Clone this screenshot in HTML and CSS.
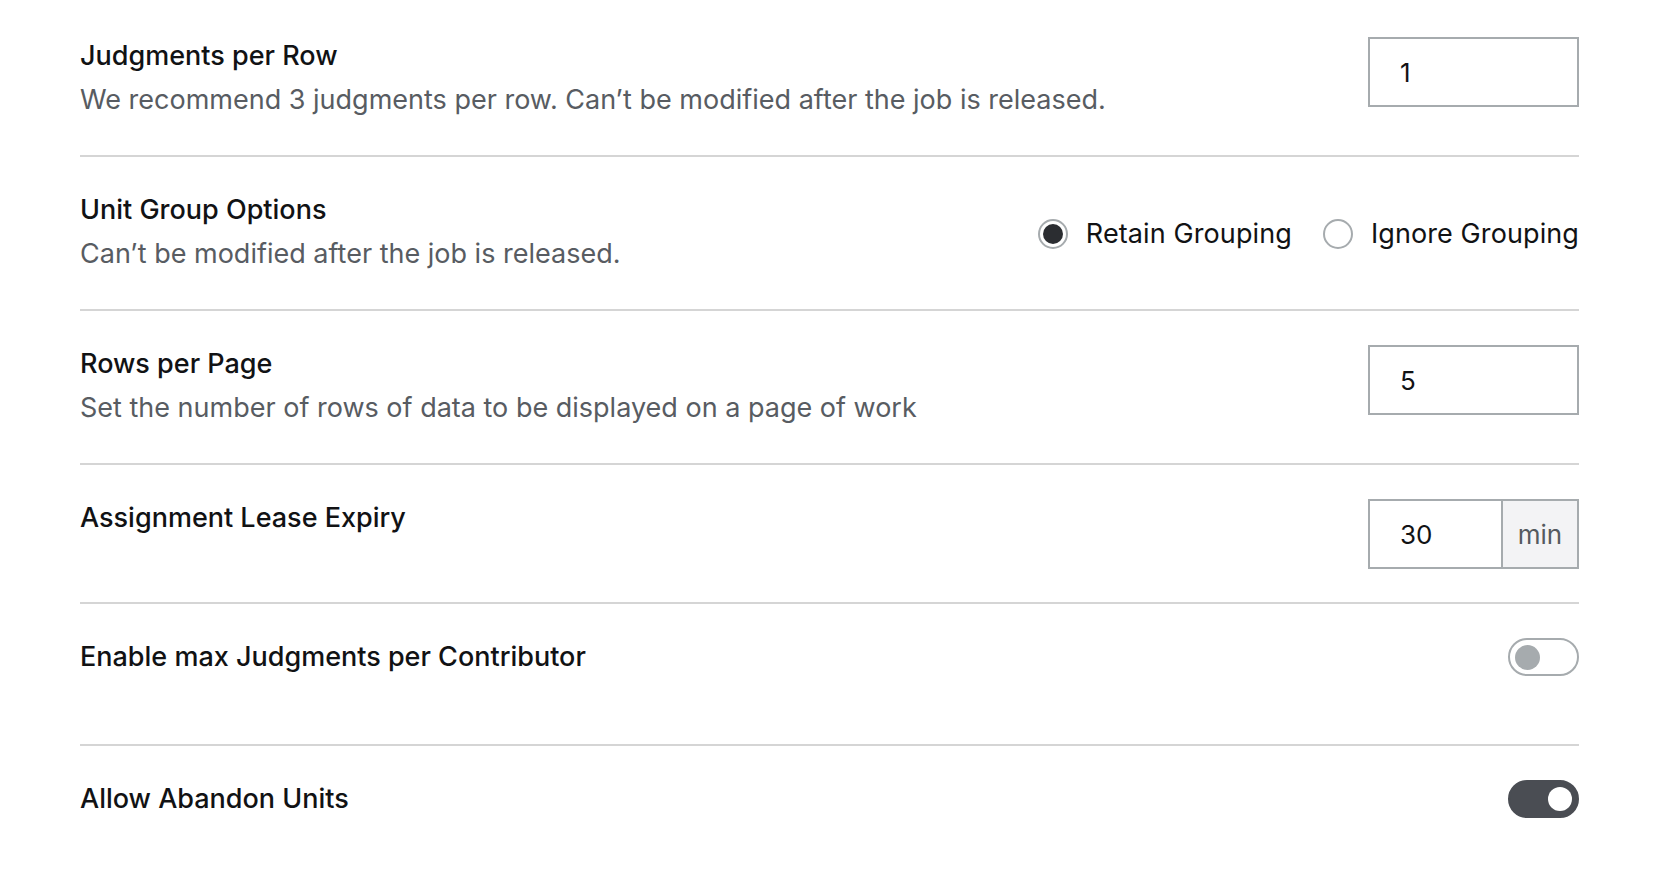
FILE: index.html
```html
<!DOCTYPE html>
<html>
<head>
<meta charset="utf-8">
<link rel="stylesheet" href="styles.css">
</head>
<body>
<div class="settings">
  <div class="row">
    <div class="text">
      <div class="title">Judgments per Row</div>
      <div class="desc">We recommend 3 judgments per row. Can’t be modified after the job is released.</div>
    </div>
    <div class="control top">
      <div class="input"><span class="value">1</span></div>
    </div>
  </div>

  <div class="row">
    <div class="text">
      <div class="title">Unit Group Options</div>
      <div class="desc">Can’t be modified after the job is released.</div>
    </div>
    <div class="control center radios">
      <label class="radio"><span class="circle checked"></span><span class="rlabel">Retain Grouping</span></label>
      <label class="radio"><span class="circle"></span><span class="rlabel">Ignore Grouping</span></label>
    </div>
  </div>

  <div class="row">
    <div class="text">
      <div class="title">Rows per Page</div>
      <div class="desc">Set the number of rows of data to be displayed on a page of work</div>
    </div>
    <div class="control top">
      <div class="input"><span class="value">5</span></div>
    </div>
  </div>

  <div class="row">
    <div class="text">
      <div class="title">Assignment Lease Expiry</div>
    </div>
    <div class="control top">
      <div class="input addon-input"><span class="value">30</span><span class="addon">min</span></div>
    </div>
  </div>

  <div class="row tall">
    <div class="text">
      <div class="title">Enable max Judgments per Contributor</div>
    </div>
    <div class="control top">
      <span class="toggle"><span class="knob"></span></span>
    </div>
  </div>

  <div class="row last">
    <div class="text">
      <div class="title">Allow Abandon Units</div>
    </div>
    <div class="control top">
      <span class="toggle on"><span class="knob"></span></span>
    </div>
  </div>
</div>
</body>
</html>
```

FILE: styles.css
```css
html, body {
  margin: 0;
  padding: 0;
  background: #ffffff;
}

body {
  font-family: Inter, "Noto Sans", sans-serif;
  color: #111214;
}

.settings {
  padding: 3px 81px 0 80px;
}

.row {
  display: flex;
  justify-content: space-between;
  padding: 34px 0 33px;
  border-bottom: 2px solid #d5d5d5;
}

.row.tall {
  min-height: 73px;
}

.row.last {
  border-bottom: none;
}

.text {
  display: flex;
  flex-direction: column;
}

.title {
  font-size: 27px;
  font-weight: 500;
  line-height: 38px;
  color: #111214;
}

.desc {
  font-size: 27px;
  line-height: 38px;
  margin-top: 6px;
  margin-bottom: 3px;
  color: #585c62;
}

.control {
  display: flex;
}

.control.top {
  align-self: flex-start;
}

.control.center {
  align-self: center;
}

.input {
  box-sizing: border-box;
  width: 211px;
  height: 70px;
  border: 2px solid #a6abae;
  display: flex;
  align-items: center;
  padding-left: 30px;
  font-size: 26px;
  color: #111214;
}

.addon-input {
  padding-left: 0;
}

.addon-input .value {
  flex: 1;
  padding-left: 30px;
}

.addon {
  box-sizing: border-box;
  width: 76px;
  height: 100%;
  background: #f3f3f5;
  border-left: 2px solid #a6abae;
  display: flex;
  align-items: center;
  justify-content: center;
  color: #555a60;
  font-size: 26px;
}

.radios {
  gap: 31px;
}

.radio {
  display: flex;
  align-items: center;
  gap: 18px;
  font-size: 27px;
  letter-spacing: 0.1px;
  line-height: 38px;
  color: #111214;
}

.circle {
  box-sizing: border-box;
  width: 30px;
  height: 30px;
  border-radius: 50%;
  border: 2px solid #a6abae;
  background: #fff;
  display: inline-flex;
  align-items: center;
  justify-content: center;
}

.circle.checked::after {
  content: "";
  width: 20px;
  height: 20px;
  border-radius: 50%;
  background: #2b2d31;
}

.toggle {
  box-sizing: border-box;
  width: 71px;
  height: 38px;
  border-radius: 19px;
  border: 2px solid #a6abae;
  background: #fff;
  display: flex;
  align-items: center;
  padding: 0 5px;
}

.toggle .knob {
  width: 25px;
  height: 25px;
  border-radius: 50%;
  background: #a6abae;
}

.toggle.on {
  background: #4a4d53;
  border-color: #4a4d53;
  justify-content: flex-end;
}

.toggle.on .knob {
  background: #ffffff;
  width: 24px;
  height: 24px;
}
```
